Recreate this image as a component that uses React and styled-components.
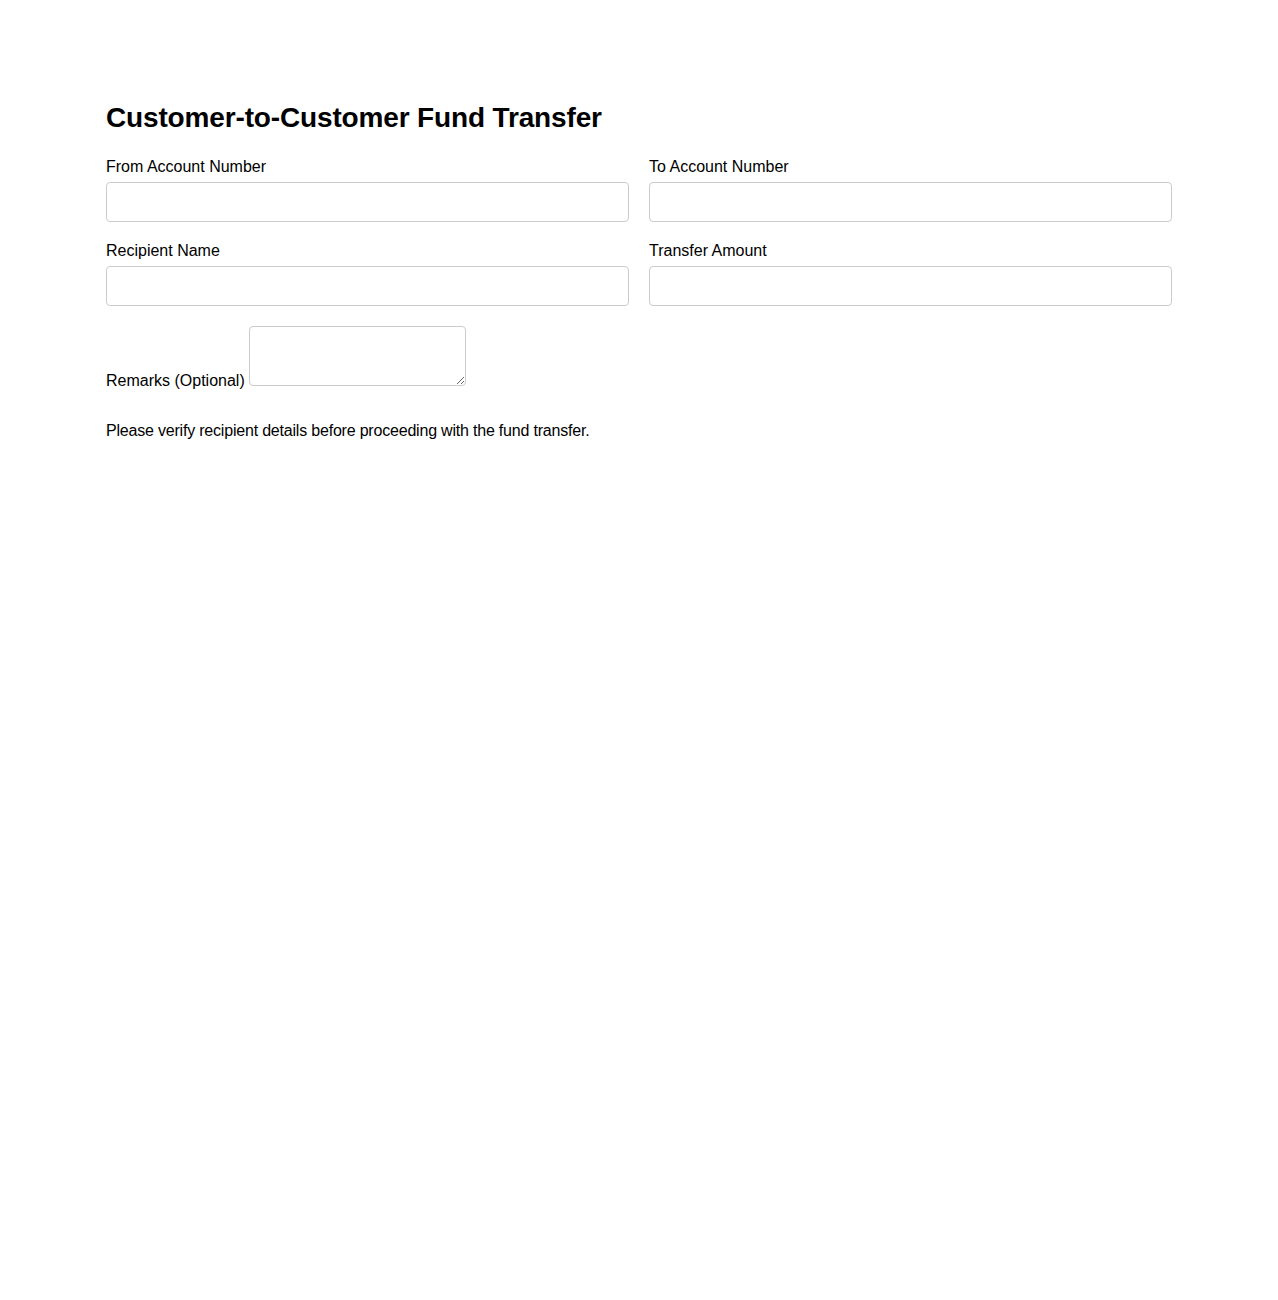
import React from 'react'
import styled, { createGlobalStyle } from 'styled-components'

const GlobalStyle = createGlobalStyle`
  body {
    margin: 0;
    background: #fff;
    color: #000;
    font-family: 'Liberation Sans', Arial, sans-serif;
  }
`

const Page = styled.div`
  max-width: 1066px;
  margin: 0 auto;
  padding: 101px 32px 32px;
`

const Title = styled.h1`
  margin: 0 0 23px;
  font-size: 28px;
  font-weight: 700;
  line-height: 34px;
  letter-spacing: -0.15px;
`

const FieldGrid = styled.div`
  display: grid;
  grid-template-columns: 1fr 1fr;
  column-gap: 20px;
  row-gap: 20px;
`

const Field = styled.div`
  display: flex;
  flex-direction: column;
`

const Label = styled.label`
  font-size: 16px;
  line-height: 18px;
  margin-bottom: 6px;
`

const Input = styled.input`
  box-sizing: border-box;
  height: 40px;
  width: 100%;
  padding: 8px 10px;
  border: 1px solid #ccc;
  border-radius: 4px;
  font-family: inherit;
  font-size: 16px;
`

const RemarksRow = styled.div`
  margin-top: 20px;
  font-size: 16px;
`

const Remarks = styled.textarea`
  box-sizing: border-box;
  width: 217px;
  height: 60px;
  margin-left: 4px;
  border: 1px solid #ccc;
  border-radius: 4px;
  font-family: inherit;
  vertical-align: baseline;
`

const Note = styled.p`
  margin: 32px 0 0;
  font-size: 16px;
  line-height: 18px;
  letter-spacing: -0.2px;
`

const fields = [
  { id: 'fromAccount', label: 'From Account Number' },
  { id: 'toAccount', label: 'To Account Number' },
  { id: 'recipient', label: 'Recipient Name' },
  { id: 'amount', label: 'Transfer Amount' },
]

export default function App() {
  return (
    <>
      <GlobalStyle />
      <Page>
        <Title>Customer-to-Customer Fund Transfer</Title>
        <FieldGrid>
          {fields.map((f) => (
            <Field key={f.id}>
              <Label htmlFor={f.id}>{f.label}</Label>
              <Input id={f.id} type="text" />
            </Field>
          ))}
        </FieldGrid>
        <RemarksRow>
          <label htmlFor="remarks">Remarks (Optional)</label>
          <Remarks id="remarks" />
        </RemarksRow>
        <Note>Please verify recipient details before proceeding with the fund transfer.</Note>
      </Page>
    </>
  )
}
